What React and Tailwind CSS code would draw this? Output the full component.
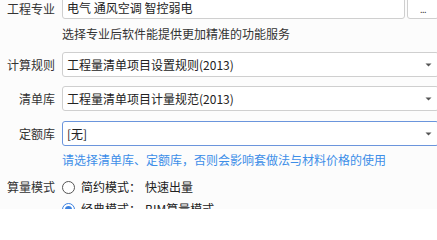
import React from "react";

const font = { fontFamily: '"Noto Sans CJK SC", "Noto Sans", sans-serif' };

function Label({ children }) {
  return (
    <div className="w-[56px] shrink-0 pr-[1px] text-right text-[12px] leading-[16px] text-[#333]">
      {children}
    </div>
  );
}

function Caret() {
  return (
    <svg width="7" height="4" viewBox="0 0 7 4" className="shrink-0">
      <path d="M0.5 0.5 L6.5 0.5 L3.5 3.5 Z" fill="#555" />
    </svg>
  );
}

function Select({ value, focused }) {
  return (
    <div
      className={
        "flex h-[25px] flex-1 items-center justify-between rounded-[3px] border bg-white pl-[4px] pr-[6px] " +
        (focused ? "border-[#6b95dc]" : "border-[#cfcfcf]")
      }
    >
      <span className="text-[12px] leading-[16px] text-[#222]">{value}</span>
      <Caret />
    </div>
  );
}

function Radio({ checked }) {
  return (
    <span
      className={
        "flex h-[13px] w-[13px] shrink-0 items-center justify-center rounded-full border bg-white " +
        (checked ? "border-[#3c82e0]" : "border-[#555]")
      }
    >
      {checked && <span className="h-[7px] w-[7px] rounded-full bg-[#3c82e0]" />}
    </span>
  );
}

export default function App() {
  return (
    <div className="h-[209px] w-[437px] overflow-hidden bg-[#fcfcfc]" style={font}>
      <div className="-mt-[6px] flex flex-col">
        <div className="flex h-[25px] items-center gap-[6px]">
          <div className="flex h-full items-end pb-[2px]">
            <Label>工程专业</Label>
          </div>
          <div className="flex h-full flex-1 items-end gap-[2px] pr-0">
            <div className="flex h-[25px] flex-1 items-end rounded-[3px] border border-[#cfcfcf] bg-white pb-[2px] pl-[4px]">
              <span className="text-[12px] leading-[16px] text-[#222]">电气 通风空调 智控弱电</span>
            </div>
            <div className="-mr-[2px] flex h-[25px] w-[32px] items-end justify-center rounded-[3px] border border-[#cfcfcf] bg-white pb-[4px]">
              <span className="text-[9px] leading-[9px] tracking-[-0.5px] text-[#444]">...</span>
            </div>
          </div>
        </div>

        <div className="mb-[10px] mt-[7px] pl-[62px] text-[12px] leading-[16px] text-[#333]">
          选择专业后软件能提供更加精准的功能服务
        </div>

        <div className="-mr-[2px] flex items-center gap-[6px]">
          <Label>计算规则</Label>
          <Select value="工程量清单项目设置规则(2013)" />
        </div>

        <div className="-mr-[2px] mt-[9px] flex items-center gap-[6px]">
          <Label>清单库</Label>
          <Select value="工程量清单项目计量规范(2013)" />
        </div>

        <div className="-mr-[2px] mt-[10px] flex items-center gap-[6px]">
          <Label>定额库</Label>
          <Select value="[无]" focused />
        </div>

        <div className="mt-[6px] pl-[62px] text-[12px] leading-[16px] text-[#3d8ee8]">
          请选择清单库、定额库，否则会影响套做法与材料价格的使用
        </div>

        <div className="mt-[8px] flex h-[22px] items-center gap-[6px]">
          <Label>算量模式</Label>
          <div className="flex items-center">
            <Radio />
            <span className="ml-[6px] text-[12px] leading-[16px] text-[#222]">简约模式：</span>
            <span className="ml-[4px] text-[12px] leading-[16px] text-[#222]">快速出量</span>
          </div>
        </div>

        <div className="flex h-[22px] items-center gap-[6px]">
          <div className="w-[56px] shrink-0" />
          <div className="flex items-center">
            <Radio checked />
            <span className="ml-[6px] text-[12px] leading-[16px] text-[#222]">经典模式：</span>
            <span className="ml-[4px] text-[12px] leading-[16px] text-[#222]">BIM算量模式</span>
          </div>
        </div>
      </div>
    </div>
  );
}
